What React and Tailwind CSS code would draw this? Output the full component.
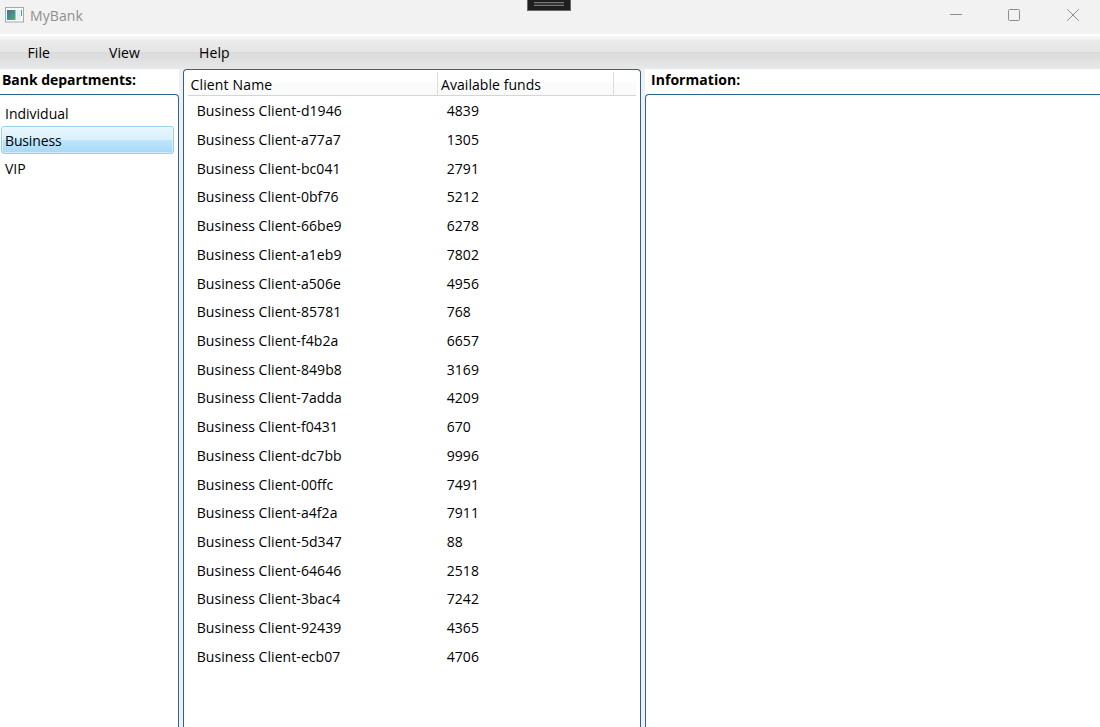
const clients = [
  ['d1946', 4839], ['a77a7', 1305], ['bc041', 2791], ['0bf76', 5212],
  ['66be9', 6278], ['a1eb9', 7802], ['a506e', 4956], ['85781', 768],
  ['f4b2a', 6657], ['849b8', 3169], ['7adda', 4209], ['f0431', 670],
  ['dc7bb', 9996], ['00ffc', 7491], ['a4f2a', 7911], ['5d347', 88],
  ['64646', 2518], ['3bac4', 7242], ['92439', 4365], ['ecb07', 4706],
];

function TitleBar() {
  return (
    <header className="relative flex h-[34px] shrink-0 items-start bg-[#f2f2f2]">
      <svg className="ml-[5px] mt-[7px] shrink-0" width="19" height="16" viewBox="0 0 19 16">
        <defs>
          <linearGradient id="app" x1="0" y1="0" x2="1" y2="1">
            <stop offset="0" stopColor="#3d6f9c" />
            <stop offset="1" stopColor="#4fae78" />
          </linearGradient>
        </defs>
        <rect x=".5" y=".5" width="18" height="14.5" fill="#f7f8f8" stroke="#a3a9ad" />
        <rect x="2" y="3" width="8.5" height="10" fill="url(#app)" />
        <rect x="11.5" y="3" width="4" height="10" fill="#e9ecec" />
        <path d="M16.5 3v6" stroke="#4b9a8e" />
      </svg>
      <span className="ml-[6px] mt-[6px] text-[14px] leading-5 tracking-[0.08px] text-[#8f8f8f]">MyBank</span>
      <div className="absolute left-[527px] top-0 flex h-[11px] w-[44px] justify-center border border-t-0 border-[#696969] bg-[#1f1f1f] pt-[2px]">
        <div className="h-[4px] w-[30px] border-y border-[#777] bg-[#353535]" />
      </div>
      <svg className="ml-auto mr-[20px] mt-[8px]" width="131" height="14" viewBox="0 0 131 14" fill="none" stroke="#8e8e8e">
        <path d="M1 6.5h12" />
        <rect x="59.5" y="1.5" width="11" height="11" rx="1" />
        <path d="M118.2 1.2l11.6 11.6M129.8 1.2L118.2 12.8" />
      </svg>
    </header>
  );
}

function MenuBar() {
  return (
    <nav className="flex h-[35px] shrink-0 bg-[linear-gradient(#fff_0%,#ebebeb_20%,#e5e5e5_50%,#dadada_52%,#e7e8ea_100%)] pt-[9px] text-[14px] leading-5 tracking-[0.1px]">
      <span className="w-[81px] pl-[27.5px]">File</span>
      <span className="w-[91px] pl-[28px]">View</span>
      <span className="pl-[27px]">Help</span>
    </nav>
  );
}

export default function App() {
  return (
    <div className="flex h-[727px] w-[1100px] flex-col overflow-hidden bg-[#f0f0f0] font-['Open_Sans','Noto_Sans',sans-serif] text-[14px] text-black">
      <TitleBar />
      <MenuBar />
      <main className="flex min-h-0 flex-1">
        <section className="flex w-[179px] flex-col bg-white">
          <h2 className="h-[25px] pl-[2px] pt-[1px] text-[14px] font-bold leading-5 tracking-[-0.04px]">Bank departments:</h2>
          <div className="flex-1 rounded-tr-[4px] border-r border-t border-[#2a6592] pt-[5px]">
            <div className="h-[26px] pl-[5px] leading-[27px]">Individual</div>
            <div className="ml-px h-[28px] w-[173px] rounded-[3px] border border-[#98d1ef] bg-[linear-gradient(#e9f6fd_0%,#d9f0fc_48%,#bee6fd_50%,#a7d9f5_100%)] pl-[3px] leading-[27px] tracking-[-0.15px] shadow-[inset_0_0_0_1px_rgba(255,255,255,0.45)]">Business</div>
            <div className="h-[28px] pl-[5px] leading-[30px]">VIP</div>
          </div>
        </section>
        <section className="ml-[4px] flex w-[458px] flex-col rounded-t-[4px] border-x border-t border-[#2a6592] bg-white">
          <div className="mx-[4px] mt-[2px] flex h-[24px] border-b border-[#d5d5d5] bg-[linear-gradient(#fff_0%,#fff_45%,#fafbfc_50%,#fafafa_100%)] leading-[25px]">
            <div className="w-[250px] border-r border-[#dcdcdc] pl-[2.5px] tracking-[0.15px]">Client Name</div>
            <div className="w-[176px] border-r border-[#dcdcdc] pl-[3px] tracking-[0.06px]">Available funds</div>
          </div>
          <div className="pt-[1.2px]">
            {clients.map(([id, funds]) => (
              <div key={id} className="flex h-[28.72px] pl-[12.7px] leading-[28px] tracking-[0.07px]">
                <span className="w-[250px]">Business Client-{id}</span>
                <span>{funds}</span>
              </div>
            ))}
          </div>
        </section>
        <section className="ml-[4px] flex flex-1 flex-col bg-white">
          <h2 className="h-[25px] pl-[6px] pt-[1px] text-[14px] font-bold leading-5 tracking-[0.05px]">Information:</h2>
          <div className="flex-1 rounded-tl-[4px] border-l border-t border-[#2a6592]" />
        </section>
      </main>
    </div>
  );
}
